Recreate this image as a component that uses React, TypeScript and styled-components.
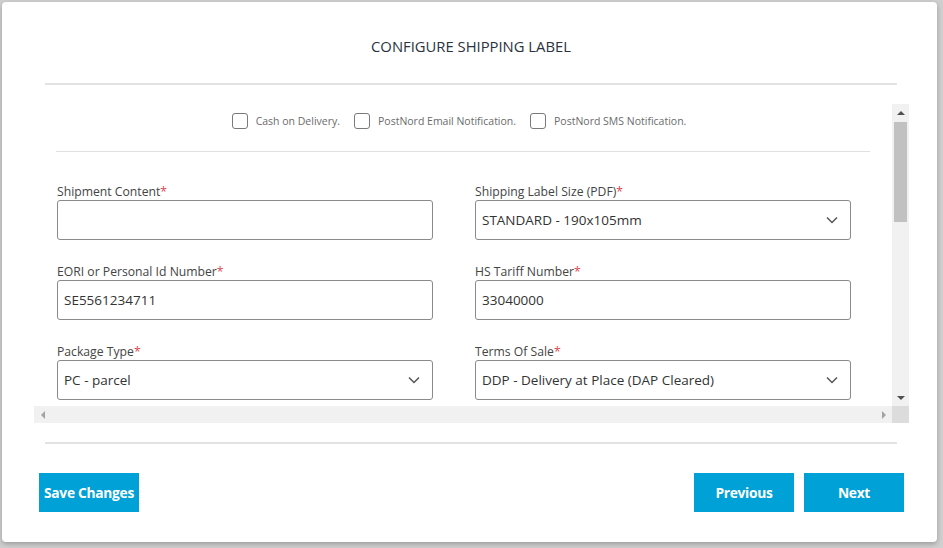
import React from "react";
import styled, { createGlobalStyle } from "styled-components";

const Global = createGlobalStyle`
  * { box-sizing: border-box; }
  html, body { margin: 0; padding: 0; }
  body {
    background: #cfcfcf;
    font-family: "Open Sans", "Noto Sans", sans-serif;
    width: 943px;
    height: 548px;
    overflow: hidden;
  }
`;

const Page = styled.div`
  width: 943px;
  height: 548px;
  padding: 2px 6px 6px 2px;
`;

const Dialog = styled.div`
  width: 935px;
  height: 540px;
  background: #fff;
  border-radius: 4px;
  box-shadow: 0 2px 5px rgba(0, 0, 0, 0.25);
  display: flex;
  flex-direction: column;
`;

const Header = styled.div`
  margin: 0 40px 0 43px;
  height: 83px;
  border-bottom: 2px solid #e2e2e2;
  display: flex;
  align-items: center;
  justify-content: center;
  padding-top: 6px;
`;

const Title = styled.h1`
  margin: 0;
  font-size: 14.8px;
  font-weight: 400;
  color: #2b3340;
  letter-spacing: 0;
`;

const ScrollFrame = styled.div`
  margin: 19px 0 0 32px;
  width: 875px;
  height: 319px;
  display: grid;
  grid-template-columns: 858px 17px;
  grid-template-rows: 302px 17px;
`;

const Viewport = styled.div`
  overflow: hidden;
  padding: 0 22px 0 22px;
`;

const CheckRow = styled.div`
  height: 48px;
  display: flex;
  align-items: flex-start;
  justify-content: center;
  gap: 14px;
  padding-right: 8px;
  padding-top: 9px;
  border-bottom: 1px solid #e0e0e0;
`;

const CheckItem = styled.label`
  display: flex;
  align-items: center;
  gap: 8px;
  font-size: 10.5px;
  color: #6b6b6b;
`;

const Box = styled.span`
  width: 16px;
  height: 16px;
  border: 1px solid #7a7a7a;
  border-radius: 3px;
  background: #fff;
`;

const FormGrid = styled.div`
  display: grid;
  grid-template-columns: 376px 376px;
  column-gap: 42px;
  row-gap: 22px;
  padding: 30px 0 0 1px;
`;

const Field = styled.div`
  display: flex;
  flex-direction: column;
`;

const Label = styled.div`
  font-size: 12.2px;
  color: #444;
  line-height: 18px;
  padding-top: 1px;
  margin-bottom: -1px;
`;

const Req = styled.span`
  color: #e0474c;
`;

const InputBox = styled.div`
  height: 40px;
  border: 1px solid #8a8a8a;
  border-radius: 3px;
  display: flex;
  align-items: center;
  justify-content: space-between;
  padding: 0 12px 0 6px;
  font-size: 13.5px;
  color: #333;
`;

const VTrack = styled.div`
  background: #f1f1f1;
  display: flex;
  flex-direction: column;
  align-items: center;
`;

const ArrowCell = styled.div`
  height: 17px;
  width: 17px;
  display: flex;
  align-items: center;
  justify-content: center;
`;

const VThumb = styled.div`
  width: 13px;
  height: 100px;
  margin-top: 1px;
  background: #c1c1c1;
`;

const Spacer = styled.div`
  flex: 1;
`;

const HTrack = styled.div`
  background: #f1f1f1;
  display: flex;
  align-items: center;
  justify-content: space-between;
`;

const Corner = styled.div`
  background: #dcdcdc;
`;

const Footer = styled.div`
  margin: 19px 40px 0 43px;
  border-top: 2px solid #e2e2e2;
`;

const Buttons = styled.div`
  display: flex;
  align-items: center;
  margin: 29px -7px 0 -6px;
  gap: 10px;
`;

const Btn = styled.button`
  width: 100px;
  height: 39px;
  border: none;
  border-radius: 0;
  background: #00a1d6;
  color: #fff;
  font-family: "Open Sans", sans-serif;
  font-weight: 700;
  font-size: 13.8px;
  letter-spacing: -0.3px;
  padding: 0;
  cursor: pointer;
`;

const Chevron = () => (
  <svg width="12" height="8" viewBox="0 0 12 8">
    <path d="M1 1.5 L6 6.5 L11 1.5" fill="none" stroke="#555" strokeWidth="1.5" />
  </svg>
);

const Tri = ({ dir }: { dir: "up" | "down" | "left" | "right" }) => {
  const pts = {
    up: "0,5 4,1 8,5",
    down: "0,1 4,5 8,1",
    left: "5,0 1,4 5,8",
    right: "1,0 5,4 1,8",
  }[dir];
  const horiz = dir === "left" || dir === "right";
  return (
    <svg width={horiz ? 6 : 8} height={horiz ? 8 : 6} viewBox={horiz ? "0 0 6 8" : "0 0 8 6"}>
      <polygon points={pts} fill={horiz ? "#a3a3a3" : "#505050"} />
    </svg>
  );
};

const fields: { label: string; value: string; select: boolean }[] = [
  { label: "Shipment Content", value: "", select: false },
  { label: "Shipping Label Size (PDF)", value: "STANDARD - 190x105mm", select: true },
  { label: "EORI or Personal Id Number", value: "SE5561234711", select: false },
  { label: "HS Tariff Number", value: "33040000", select: false },
  { label: "Package Type", value: "PC - parcel", select: true },
  { label: "Terms Of Sale", value: "DDP - Delivery at Place (DAP Cleared)", select: true },
];

export default function App() {
  return (
    <>
      <Global />
      <Page>
        <Dialog>
          <Header>
            <Title>CONFIGURE SHIPPING LABEL</Title>
          </Header>
          <ScrollFrame>
            <Viewport>
              <CheckRow>
                <CheckItem><Box />Cash on Delivery.</CheckItem>
                <CheckItem><Box />PostNord Email Notification.</CheckItem>
                <CheckItem><Box />PostNord SMS Notification.</CheckItem>
              </CheckRow>
              <FormGrid>
                {fields.map((f) => (
                  <Field key={f.label}>
                    <Label>
                      {f.label}
                      <Req>*</Req>
                    </Label>
                    <InputBox>
                      <span>{f.value}</span>
                      {f.select && <Chevron />}
                    </InputBox>
                  </Field>
                ))}
              </FormGrid>
            </Viewport>
            <VTrack>
              <ArrowCell><Tri dir="up" /></ArrowCell>
              <VThumb />
              <Spacer />
              <ArrowCell><Tri dir="down" /></ArrowCell>
            </VTrack>
            <HTrack>
              <ArrowCell><Tri dir="left" /></ArrowCell>
              <ArrowCell><Tri dir="right" /></ArrowCell>
            </HTrack>
            <Corner />
          </ScrollFrame>
          <Footer>
            <Buttons>
              <Btn>Save Changes</Btn>
              <Spacer />
              <Btn>Previous</Btn>
              <Btn>Next</Btn>
            </Buttons>
          </Footer>
        </Dialog>
      </Page>
    </>
  );
}
